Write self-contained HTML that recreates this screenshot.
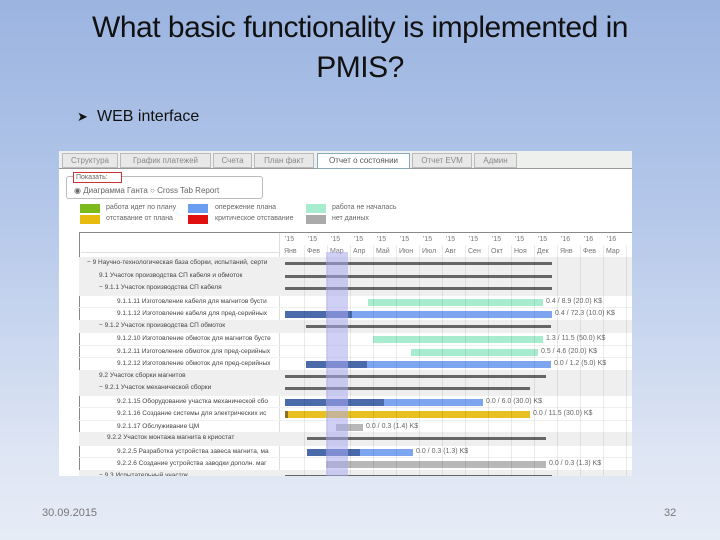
<!DOCTYPE html>
<html><head><meta charset="utf-8"><style>
*{margin:0;padding:0;box-sizing:border-box}
body{width:720px;height:540px;overflow:hidden;position:relative;font-family:"Liberation Sans",sans-serif;background:linear-gradient(#9bb4e0 0%,#b5c8ea 40%,#dfe6f4 85%,#e6ecf6 100%)}
.a{position:absolute;white-space:nowrap}
.t{font-size:30px;color:#111;text-align:center;width:720px;left:0;letter-spacing:-0.5px}
#ss{position:absolute;left:59px;top:151px;width:573px;height:325px;background:#fff;overflow:hidden;font-size:7px;color:#666}
.tab{position:absolute;top:2px;height:15px;border:1px solid #bbb;background:#e8e8e8;font-size:8px;color:#888;text-align:center;line-height:13px}
.sw{position:absolute;width:20px;height:9px}
.row{position:absolute;left:20px;width:553px;height:12.5px}
.lab{position:absolute;font-size:6.5px;color:#444;top:2px}
.bar{position:absolute;height:7px;top:3px}
.sum{position:absolute;height:3px;top:5px;background:#666}
.val{position:absolute;font-size:7px;color:#666;top:2px}
</style></head><body>
<div class="a t" style="top:11px">What basic functionality is implemented in</div>
<div class="a t" style="top:51px">PMIS?</div>
<div class="a" style="left:77px;top:109px;font-size:13px;color:#111">&#10148;</div>
<div class="a" style="left:97px;top:108px;font-size:16px;color:#111">WEB interface</div>
<div class="a" style="left:42px;top:507px;font-size:11px;color:#777">30.09.2015</div>
<div class="a" style="left:664px;top:507px;font-size:11px;color:#777">32</div>

<div id="ss">
<div style="position:absolute;left:0;top:0;width:573px;height:17px;background:#eef0ee"></div>
<div style="position:absolute;left:0;top:17px;width:573px;height:1px;background:#999"></div>
<div class="tab" style="left:3px;width:56px">Структура</div>
<div class="tab" style="left:61px;width:91px">График платежей</div>
<div class="tab" style="left:154px;width:39px">Счета</div>
<div class="tab" style="left:195px;width:60px">План факт</div>
<div class="tab" style="left:258px;width:93px;background:#fff;color:#555;border-color:#8ab;height:16px">Отчет о состоянии</div>
<div class="tab" style="left:353px;width:60px">Отчет EVM</div>
<div class="tab" style="left:415px;width:43px">Админ</div>
<div style="position:absolute;left:7px;top:25px;width:197px;height:23px;border:1px solid #bbb;border-radius:3px"></div>
<div style="position:absolute;left:14px;top:21px;width:49px;height:11px;border:1px solid #c33;background:#fff;font-size:7px;line-height:9px;padding-left:2px;color:#666">Показать:</div>
<div class="a" style="left:15px;top:35px;font-size:8px;color:#666">&#9673; Диаграмма Ганта &#9675; Cross Tab Report</div>
<div class="sw" style="left:21px;top:53px;background:#7cba1c"></div>
<div class="sw" style="left:21px;top:64px;background:#e8bb10"></div>
<div class="sw" style="left:129px;top:53px;background:#6a9cf0"></div>
<div class="sw" style="left:129px;top:64px;background:#e01010"></div>
<div class="sw" style="left:247px;top:53px;background:#a8ecd0"></div>
<div class="sw" style="left:247px;top:64px;background:#aaa"></div>
<div class="a" style="left:47px;top:53px">работа идет по плану</div>
<div class="a" style="left:47px;top:64px">отставание от плана</div>
<div class="a" style="left:156px;top:53px">опережение плана</div>
<div class="a" style="left:156px;top:64px">критическое отставание</div>
<div class="a" style="left:273px;top:53px">работа не началась</div>
<div class="a" style="left:273px;top:64px">нет данных</div>
<div style="position:absolute;left:20px;top:81px;width:553px;height:1px;background:#888"></div>
<div style="position:absolute;left:20px;top:81px;width:1px;height:250px;background:#888"></div>
<div style="position:absolute;left:220px;top:82px;width:1px;height:250px;background:#ddd"></div>
<div style="position:absolute;left:22px;top:101px;width:198px;height:1px;background:#ddd"></div>
<div id="g"></div>
<div style="position:absolute;left:267px;top:101px;width:22px;height:230px;background:rgba(170,170,240,0.55)"></div>
</div>
<script>
var g=document.getElementById('g'),h='';
var m=['Янв','Фев','Мар','Апр','Май','Июн','Июл','Авг','Сен','Окт','Ноя','Дек','Янв','Фев','Мар'];
for(var i=0;i<15;i++){var x=225+i*23;h+='<div class="a" style="left:'+(x+1)+'px;top:85px;color:#777">\''+(i<12?15:16)+'</div><div class="a" style="left:'+x+'px;top:97px;color:#777">'+m[i]+'</div>';}
var R=[
[1,'− 9 Научно-технологическая база сборки, испытаний, серти',8,'s',285,552],
[1,'9.1 Участок производства СП кабеля и обмоток',20,'s',285,552],
[1,'− 9.1.1 Участок производства СП кабеля',20,'s',285,552],
[0,'9.1.1.11 Изготовление кабеля для магнитов бусти',38,'b',368,543,0,'#a8ecd0','0.4 / 8.9 (20.0) K$'],
[0,'9.1.1.12 Изготовление кабеля для пред-серийных',38,'b',285,552,352,'#7ea6f0','0.4 / 72.3 (10.0) K$'],
[1,'− 9.1.2 Участок производства СП обмоток',20,'s',306,551],
[0,'9.1.2.10 Изготовление обмоток для магнитов бусте',38,'b',373,543,0,'#a8ecd0','1.3 / 11.5 (50.0) K$'],
[0,'9.1.2.11 Изготовление обмоток для пред-серийных',38,'b',411,538,0,'#a8ecd0','0.5 / 4.6 (20.0) K$'],
[0,'9.1.2.12 Изготовление обмоток для пред-серийных',38,'b',306,551,367,'#7ea6f0','0.0 / 1.2 (5.0) K$'],
[1,'9.2 Участок сборки магнитов',20,'s',285,546],
[1,'− 9.2.1 Участок механической сборки',20,'s',285,530],
[0,'9.2.1.15 Оборудование участка механической сбо',38,'b',285,483,384,'#7ea6f0','0.0 / 6.0 (30.0) K$'],
[0,'9.2.1.16 Создание системы для электрических ис',38,'b',285,530,288,'#e8c020','0.0 / 11.5 (30.0) K$'],
[0,'9.2.1.17 Обслуживание ЦМ',38,'b',336,363,0,'#b8b8b8','0.0 / 0.3 (1.4) K$'],
[1,'9.2.2 Участок монтажа магнита в криостат',28,'s',307,546],
[0,'9.2.2.5 Разработка устройства завеса магнита, ма',38,'b',307,413,360,'#7ea6f0','0.0 / 0.3 (1.3) K$'],
[0,'9.2.2.6 Создание устройства заводки дополн. маг',38,'b',326,546,0,'#b8b8b8','0.0 / 0.3 (1.3) K$'],
[1,'− 9.3 Испытательный участок',20,'s',285,552]];
for(var j=0;j<R.length;j++){var r=R[j],y=106+j*12.5;
h+='<div class="row" style="top:'+y+'px;'+(r[0]?'background:#efefef':'border-top:1px solid #f0f0f0')+'"><div class="lab" style="left:'+r[2]+'px">'+r[1]+'</div>';
var x1=r[4]-59-20,x2=r[5]-59-20;
if(r[3]=='s'){h+='<div class="sum" style="left:'+x1+'px;width:'+(x2-x1)+'px"></div>';}
else{h+='<div class="bar" style="left:'+x1+'px;width:'+(x2-x1)+'px;background:'+r[7]+'"></div>';
if(r[6])h+='<div class="bar" style="left:'+x1+'px;width:'+(r[6]-r[4])+'px;background:'+(r[7]=='#e8c020'?'#8a7020':'#4a6aaa')+'"></div>';
h+='<div class="val" style="left:'+(x2+3)+'px">'+r[8]+'</div>';}
h+='</div>';}
for(var i=0;i<15;i++){var x=225+i*23;h+='<div style="position:absolute;left:'+(x+20)+'px;top:94px;width:1px;height:240px;background:rgba(0,0,0,0.08)"></div>';}
g.innerHTML=h;
</script>
</body></html>
